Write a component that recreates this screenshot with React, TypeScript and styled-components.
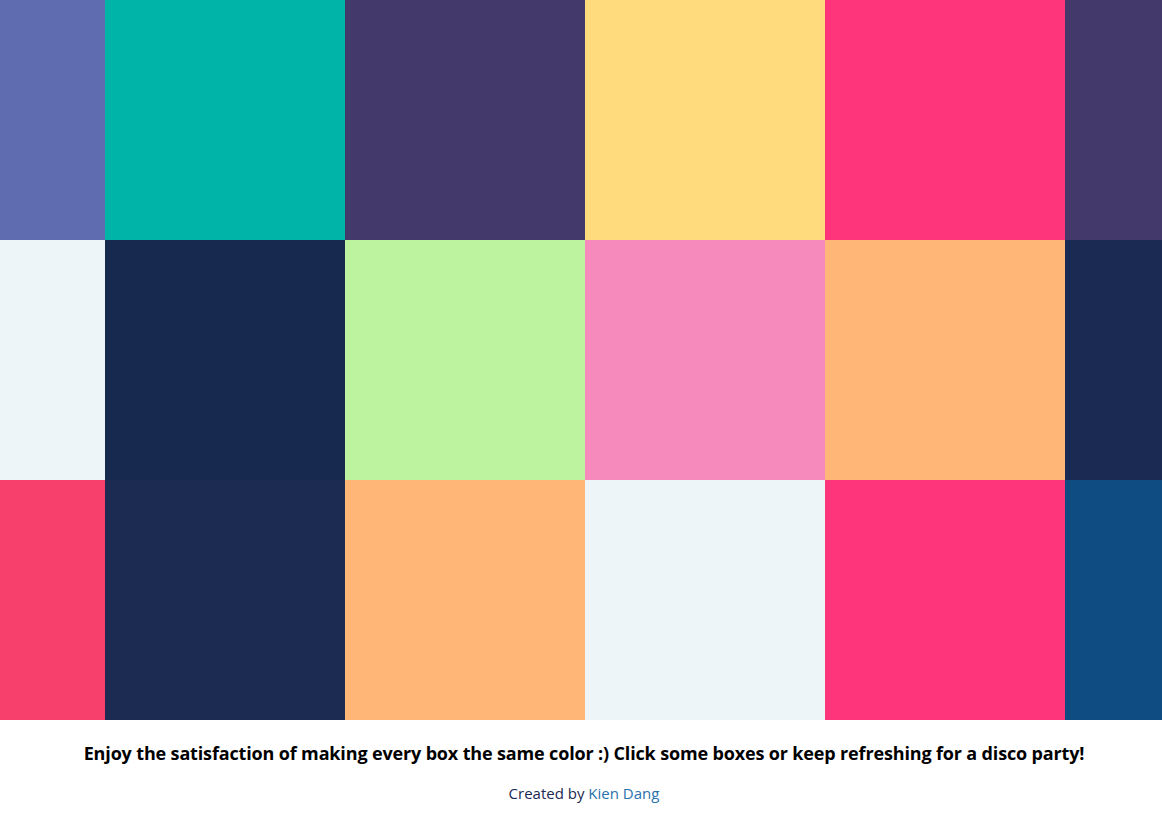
import React from "react";
import styled, { createGlobalStyle } from "styled-components";

const Global = createGlobalStyle`
  html, body { margin: 0; padding: 0; background: #fff; }
  body { font-family: "Open Sans", "Noto Sans", "DejaVu Sans", sans-serif; overflow: hidden; }
`;

const Page = styled.div`
  width: 100%;
  overflow: hidden;
`;

const Grid = styled.div`
  display: grid;
  grid-template-columns: repeat(6, 240px);
  grid-auto-rows: 240px;
  width: 1440px;
  margin-left: -135px;
`;

const Box = styled.div<{ $c: string }>`
  background: ${(p) => p.$c};
  cursor: pointer;
`;

const Footer = styled.footer`
  display: flex;
  flex-direction: column;
  align-items: center;
  padding-top: 21px;
  gap: 18px;
`;

const Headline = styled.p`
  margin: 0;
  padding-left: 6px;
  font-size: 18px;
  font-weight: 700;
  line-height: 24px;
  color: #000;
  letter-spacing: -0.15px;
`;

const Credit = styled.p`
  margin: 0;
  padding-left: 6px;
  font-size: 15px;
  line-height: 20px;
  color: #1a2a52;
`;

const Link = styled.a`
  color: #2a72ad;
  text-decoration: none;
  border-bottom: 1px dotted #2a72ad;
  padding-bottom: 1px;
`;

const colors = [
  "#5f6caf", "#00b5a8", "#433a6b", "#ffdb7e", "#ff357c", "#433a6b",
  "#edf5f8", "#182950", "#bdf29e", "#f78abd", "#ffb677", "#1a2a52",
  "#f8406d", "#1b2b52", "#ffb677", "#eef5f8", "#ff357c", "#0f4c81",
];

export default function App() {
  return (
    <Page>
      <Global />
      <Grid>
        {colors.map((c, i) => (
          <Box key={i} $c={c} />
        ))}
      </Grid>
      <Footer>
        <Headline>
          Enjoy the satisfaction of making every box the same color :) Click some boxes or keep refreshing for a disco party!
        </Headline>
        <Credit>
          Created by <Link href="#">Kien Dang</Link>
        </Credit>
      </Footer>
    </Page>
  );
}
